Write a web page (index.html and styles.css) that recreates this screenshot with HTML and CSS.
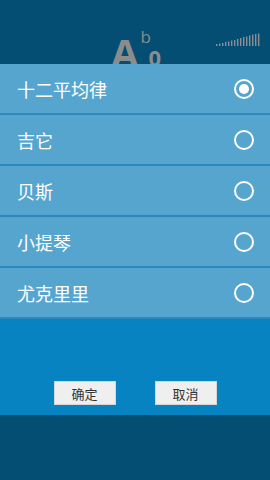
FILE: index.html
```
<!DOCTYPE html>
<html lang="zh">
<head>
  <meta charset="UTF-8">
  <meta name="viewport" content="width=device-width, initial-scale=1.0">
  <title>调音器</title>
  <link rel="stylesheet" href="styles.css">
</head>
<body>
  <div class="app">
    <div class="header">
      <div class="note">
        <span class="note-name">A</span>
        <span class="note-acc">
          <span class="flat">b</span>
          <span class="octave">0</span>
        </span>
      </div>
      <svg class="level" width="44" height="14" viewBox="0 0 44 14">
        <g fill="#8a8f95">
          <rect x="0" y="11" width="1.4" height="2"/>
          <rect x="3" y="10.5" width="1.4" height="2.5"/>
          <rect x="6" y="10" width="1.4" height="3"/>
          <rect x="9" y="9" width="1.4" height="4"/>
          <rect x="12" y="8.5" width="1.4" height="4.5"/>
          <rect x="15" y="7.5" width="1.4" height="5.5"/>
          <rect x="18" y="7" width="1.4" height="6"/>
          <rect x="21" y="6" width="1.4" height="7"/>
          <rect x="24" y="5" width="1.4" height="8"/>
          <rect x="27" y="4" width="1.4" height="9"/>
          <rect x="30" y="3.5" width="1.4" height="9.5"/>
          <rect x="33" y="2.5" width="1.4" height="10.5"/>
          <rect x="36" y="1.5" width="1.4" height="11.5"/>
          <rect x="39" y="1" width="1.4" height="12"/>
          <rect x="42" y="0.5" width="1.4" height="12.5"/>
        </g>
      </svg>
    </div>

    <div class="dialog">
      <ul class="options">
        <li class="option selected"><span>十二平均律</span><i class="radio"></i></li>
        <li class="option"><span>吉它</span><i class="radio"></i></li>
        <li class="option"><span>贝斯</span><i class="radio"></i></li>
        <li class="option"><span>小提琴</span><i class="radio"></i></li>
        <li class="option"><span>尤克里里</span><i class="radio"></i></li>
      </ul>
      <div class="actions">
        <button class="btn">确定</button>
        <button class="btn">取消</button>
      </div>
    </div>
  </div>
</body>
</html>
```
FILE: styles.css
```
body {
  margin: 0;
  font-family: "Noto Sans CJK SC", "Noto Sans", sans-serif;
  background-color: #034e72;
}
.app {
  position: relative;
  width: 270px;
  height: 480px;
  overflow: hidden;
  background-color: #034e72;
}
.header {
  height: 64px;
  display: flex;
  justify-content: center;
  overflow: hidden;
}
.note {
  display: flex;
  align-items: flex-start;
  margin-top: 33px;
  margin-left: 2px;
  color: #8c8c8c;
}
.note-name {
  font-family: "Open Sans", sans-serif;
  font-weight: 700;
  font-size: 40px;
  line-height: 40px;
}
.note-acc {
  display: flex;
  flex-direction: column;
  margin-left: 2px;
  font-family: "Open Sans", sans-serif;
}
.flat {
  font-size: 17px;
  line-height: 14px;
  margin-top: -3px;
}
.octave {
  font-size: 22px;
  font-weight: 700;
  line-height: 22px;
  margin-left: 8px;
  margin-top: 2px;
}
.level {
  position: absolute;
  top: 33px;
  right: 10px;
}
.dialog {
  position: absolute;
  top: 64px;
  left: 0;
  width: 270px;
  height: 351px;
  background-color: #0783c2;
}
.options {
  list-style: none;
  margin: 0;
  padding: 0;
}
.option {
  height: 49px;
  border-bottom: 2px solid #2b89be;
  background-color: #56a5cf;
  display: flex;
  align-items: center;
  justify-content: space-between;
  padding: 0 16px 0 17px;
  color: #fff;
  font-size: 18px;
}
.radio {
  width: 16px;
  height: 16px;
  border: 2px solid #fff;
  border-radius: 50%;
  box-sizing: content-box;
  display: flex;
  align-items: center;
  justify-content: center;
}
.selected .radio::after {
  content: "";
  width: 10px;
  height: 10px;
  border-radius: 50%;
  background-color: #fff;
}
.actions {
  display: flex;
  justify-content: center;
  gap: 39px;
  margin-top: 62px;
}
.btn {
  width: 62px;
  height: 24px;
  padding: 0;
  border: 1px solid #d6d6d6;
  background-color: #efefef;
  color: #333;
  font-family: "Noto Sans CJK SC", sans-serif;
  font-size: 13px;
}
```
